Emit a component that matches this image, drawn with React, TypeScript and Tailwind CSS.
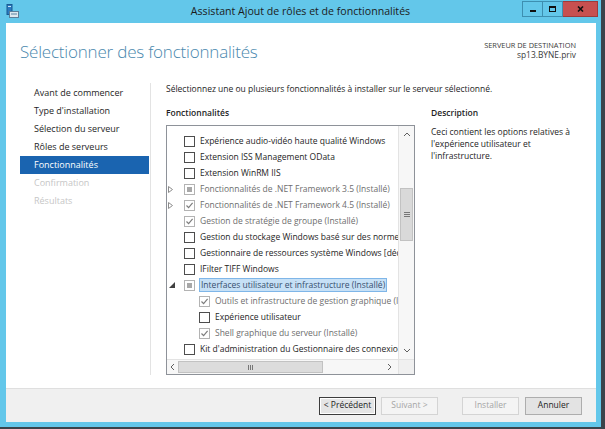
import React from "react";

type Row = {
  label: string;
  level: 0 | 1;
  exp?: "open" | "closed";
  box: "empty" | "check" | "mixed";
  installed?: boolean;
  selected?: boolean;
};

const rows: Row[] = [
  { label: "Équilibrage de la charge réseau", level: 0, box: "empty" },
  { label: "Expérience audio-vidéo haute qualité Windows", level: 0, box: "empty" },
  { label: "Extension ISS Management OData", level: 0, box: "empty" },
  { label: "Extension WinRM IIS", level: 0, box: "empty" },
  { label: "Fonctionnalités de .NET Framework 3.5 (Installé)", level: 0, exp: "closed", box: "mixed", installed: true },
  { label: "Fonctionnalités de .NET Framework 4.5 (Installé)", level: 0, exp: "closed", box: "check", installed: true },
  { label: "Gestion de stratégie de groupe (Installé)", level: 0, box: "check", installed: true },
  { label: "Gestion du stockage Windows basé sur des normes", level: 0, box: "empty" },
  { label: "Gestionnaire de ressources système Windows [déconseillé]", level: 0, box: "empty" },
  { label: "IFilter TIFF Windows", level: 0, box: "empty" },
  { label: "Interfaces utilisateur et infrastructure (Installé)", level: 0, exp: "open", box: "mixed", installed: true, selected: true },
  { label: "Outils et infrastructure de gestion graphique (Installé)", level: 1, box: "check", installed: true },
  { label: "Expérience utilisateur", level: 1, box: "empty" },
  { label: "Shell graphique du serveur (Installé)", level: 1, box: "check", installed: true },
  { label: "Kit d'administration du Gestionnaire des connexions RDS", level: 0, box: "empty" },
];

const navItems = [
  { label: "Avant de commencer", state: "normal" },
  { label: "Type d'installation", state: "normal" },
  { label: "Sélection du serveur", state: "normal" },
  { label: "Rôles de serveurs", state: "normal" },
  { label: "Fonctionnalités", state: "active" },
  { label: "Confirmation", state: "disabled" },
  { label: "Résultats", state: "disabled" },
];

function CheckBox({ state }: { state: Row["box"] }) {
  if (state === "empty") {
    return <div className="w-[11px] h-[11px] shrink-0 border border-[#4d4d4d] bg-white" />;
  }
  if (state === "mixed") {
    return (
      <div className="w-[11px] h-[11px] shrink-0 border border-[#b3b3b3] bg-white flex items-center justify-center">
        <div className="w-[5px] h-[5px] bg-[#a8a8a8]" />
      </div>
    );
  }
  return (
    <div className="w-[11px] h-[11px] shrink-0 border border-[#b3b3b3] bg-white flex items-center justify-center">
      <svg width="9" height="9" viewBox="0 0 9 9">
        <path d="M1.5 4.5 L3.6 6.6 L7.6 1.8" fill="none" stroke="#7d7d7d" strokeWidth="1.2" />
      </svg>
    </div>
  );
}

function Expander({ exp }: { exp?: Row["exp"] }) {
  if (exp === "closed") {
    return (
      <svg width="5" height="7" viewBox="0 0 5 7" className="ml-[1px]">
        <path d="M0.5 0.5 L4.5 3.5 L0.5 6.5 Z" fill="none" stroke="#8c8c8c" strokeWidth="1" />
      </svg>
    );
  }
  if (exp === "open") {
    return (
      <svg width="6" height="6" viewBox="0 0 6 6" className="ml-[2px]">
        <path d="M6 0 L6 6 L0 6 Z" fill="#404040" />
      </svg>
    );
  }
  return null;
}

function TreeRow({ row, first }: { row: Row; first?: boolean }) {
  const text = row.installed ? "text-[#6e6e6e]" : "text-[#1e1e1e]";
  return (
    <div
      className={
        first
          ? "h-[19px] flex items-start whitespace-nowrap"
          : "h-[16px] flex items-center whitespace-nowrap"
      }
    >
      {row.level === 1 && <div className="w-[15px] shrink-0" />}
      <div className="w-[17px] shrink-0 flex items-center">
        <Expander exp={row.exp} />
      </div>
      <CheckBox state={row.box} />
      {row.selected ? (
        <span className="ml-[4px] px-[1px] h-[14px] leading-[12px] border border-[#7fb6e8] bg-[#c6e0f6] text-[#364f6e]">
          {row.label}
        </span>
      ) : (
        <span className={`ml-[5px] ${text}`}>{row.label}</span>
      )}
    </div>
  );
}

function Chevron({ dir }: { dir: "up" | "down" | "left" | "right" }) {
  const d = {
    up: "M1 5 L4 2 L7 5",
    down: "M1 2 L4 5 L7 2",
    left: "M5 1 L2 4 L5 7",
    right: "M2 1 L5 4 L2 7",
  }[dir];
  return (
    <svg width="8" height="8" viewBox="0 0 8 8">
      <path d={d} fill="none" stroke="#606060" strokeWidth="1" />
    </svg>
  );
}

function FeatureList() {
  return (
    <div className="w-[249px] h-[250px] border border-[#8e9299] bg-white flex flex-col">
      <div className="flex-1 flex min-h-0">
        <div className="flex-1 overflow-hidden">
          <div className="mt-[-12px]">
            {rows.map((r, i) => (
              <TreeRow key={i} row={r} first={i === 0} />
            ))}
          </div>
        </div>
        <div className="w-[16px] border-l border-[#e3e3e3] bg-[#f7f7f7] flex flex-col">
          <div className="h-[17px] flex items-center justify-center">
            <Chevron dir="up" />
          </div>
          <div className="flex-1">
            <div className="mt-[45px] mx-[1px] h-[53px] bg-[#d9d9d9] border border-[#c2c2c2] flex flex-col items-center justify-center gap-[1px]">
              <div className="w-[6px] h-[1px] bg-[#777]" />
              <div className="w-[6px] h-[1px] bg-[#777]" />
              <div className="w-[6px] h-[1px] bg-[#777]" />
            </div>
          </div>
          <div className="h-[17px] flex items-center justify-center">
            <Chevron dir="down" />
          </div>
        </div>
      </div>
      <div className="h-[15px] flex border-t border-[#e3e3e3] bg-[#f7f7f7]">
        <div className="w-[11px] flex items-center justify-center">
          <Chevron dir="left" />
        </div>
        <div className="w-[145px] my-[1px] bg-[#dcdcdc] border border-[#c2c2c2] flex items-center justify-center gap-[1px]">
          <div className="w-[1px] h-[5px] bg-[#777]" />
          <div className="w-[1px] h-[5px] bg-[#777]" />
          <div className="w-[1px] h-[5px] bg-[#777]" />
        </div>
        <div className="flex-1" />
        <div className="w-[16px] flex items-center justify-center">
          <Chevron dir="right" />
        </div>
        <div className="w-[16px] border-l border-[#e3e3e3] bg-[#f0f0f0]" />
      </div>
    </div>
  );
}

function WizardIcon() {
  return (
    <svg width="13" height="14" viewBox="0 0 13 14">
      <rect x="1" y="0.5" width="5" height="10" fill="#2b7bc0" stroke="#1a5a92" strokeWidth="1" />
      <rect x="2" y="2" width="3" height="1" fill="#cfe6f7" />
      <rect x="3.5" y="7.5" width="9" height="6" fill="#dde8ef" stroke="#5b7f99" strokeWidth="1" />
      <rect x="5" y="9" width="6" height="2" fill="#9bb6c9" />
    </svg>
  );
}

function Button({ label, kind }: { label: string; kind: "focus" | "normal" | "disabled" }) {
  if (kind === "focus") {
    return (
      <div className="w-[57px] h-[18px] border border-[#3c3c3c] bg-[#e5e5e5] flex items-center justify-center text-[#1e1e1e] shadow-[inset_0_0_0_1px_#fff]">
        {label}
      </div>
    );
  }
  if (kind === "disabled") {
    return (
      <div className="w-[57px] h-[18px] border border-[#d4d4d4] bg-[#f4f4f4] flex items-center justify-center text-[#a5a5a5]">
        {label}
      </div>
    );
  }
  return (
    <div className="w-[57px] h-[18px] border border-[#adadad] bg-[#e3e3e3] flex items-center justify-center text-[#1e1e1e]">
      {label}
    </div>
  );
}

export default function App() {
  return (
    <div className="w-[605px] h-[429px] bg-[#3a444b] overflow-hidden font-['Open_Sans',sans-serif] text-[8.5px]">
      <div className="w-[601px] h-[427px] bg-[#63c7ea] flex flex-col">
        {/* title bar */}
        <div className="h-[23px] grid grid-cols-[1fr_auto_1fr] items-start">
          <div className="pl-[6px] pt-[4px]">
            <WizardIcon />
          </div>
          <div className="pt-[3px] text-[10.6px] text-[#1c1c1c] leading-[16px]">
            Assistant Ajout de rôles et de fonctionnalités
          </div>
          <div className="flex justify-end pr-[3px] pt-[1px]">
            <div className="w-[21px] h-[16px] border border-[#3d8fb1] flex items-end justify-center pb-[4px]">
              <div className="w-[6px] h-[2px] bg-[#111]" />
            </div>
            <div className="w-[20px] h-[16px] border border-[#3d8fb1] border-l-0 flex items-center justify-center">
              <div className="w-[7px] h-[6px] border border-[#111] border-t-2" />
            </div>
            <div className="w-[35px] h-[16px] bg-[#c75050] border border-[#9c3b3b] border-l-0 flex items-center justify-center">
              <svg width="7" height="6" viewBox="0 0 7 6">
                <path d="M1 0.5 L6 5.5 M6 0.5 L1 5.5" stroke="#111" strokeWidth="1.6" />
              </svg>
            </div>
          </div>
        </div>

        {/* client */}
        <div className="flex-1 ml-[6px] mr-[5px] mb-[5px] flex flex-col">
          <div className="h-[365px] bg-white flex flex-col">
            {/* header */}
            <div className="h-[60px] flex justify-between pl-[14px] pr-[20px]">
              <div className="pt-[17px] text-[17px] font-light text-[#4a88ae] leading-[24px] tracking-[-0.2px]">
                Sélectionner des fonctionnalités
              </div>
              <div className="pt-[17px] text-right text-[#3a3a3a] leading-[10px]">
                <div className="text-[7.4px]">SERVEUR DE DESTINATION</div>
                <div className="text-[8.4px]">sp13.BYNE.priv</div>
              </div>
            </div>

            {/* body */}
            <div className="flex pl-[14px]">
              <div className="w-[131px] h-[292px] border-r border-[#e3e3e3] pt-[1px] text-[9px]">
                {navItems.map((n) => (
                  <div
                    key={n.label}
                    className={
                      n.state === "active"
                        ? "h-[18px] mr-[1px] pl-[14px] flex items-center bg-[#1a64b0] text-white"
                        : n.state === "disabled"
                          ? "h-[18px] pl-[14px] flex items-center text-[#c6c6c6]"
                          : "h-[18px] pl-[14px] flex items-center text-[#1e1e1e]"
                    }
                  >
                    {n.label}
                  </div>
                ))}
              </div>

              <div className="ml-[15px] flex flex-col text-[#1e1e1e]">
                <div className="h-[12px] leading-[12px] whitespace-nowrap">
                  Sélectionnez une ou plusieurs fonctionnalités à installer sur le serveur sélectionné.
                </div>
                <div className="mt-[12px] flex gap-[16px]">
                  <div className="flex flex-col">
                    <div className="h-[12px] leading-[12px] font-semibold">Fonctionnalités</div>
                    <div className="mt-[6px]">
                      <FeatureList />
                    </div>
                  </div>
                  <div className="flex flex-col">
                    <div className="h-[12px] leading-[12px] font-semibold">Description</div>
                    <div className="mt-[7px] leading-[12px]">
                      Ceci contient les options relatives à<br />
                      l'expérience utilisateur et<br />
                      l'infrastructure.
                    </div>
                  </div>
                </div>
              </div>
            </div>
          </div>

          {/* footer */}
          <div className="flex-1 bg-[#f0f0f0] border-t border-[#dfdfdf] flex items-center justify-end pr-[14px]">
            <Button label="< Précédent" kind="focus" />
            <div className="ml-[5px]">
              <Button label="Suivant >" kind="disabled" />
            </div>
            <div className="ml-[24px]">
              <Button label="Installer" kind="disabled" />
            </div>
            <div className="ml-[6px]">
              <Button label="Annuler" kind="normal" />
            </div>
          </div>
        </div>
      </div>
    </div>
  );
}
